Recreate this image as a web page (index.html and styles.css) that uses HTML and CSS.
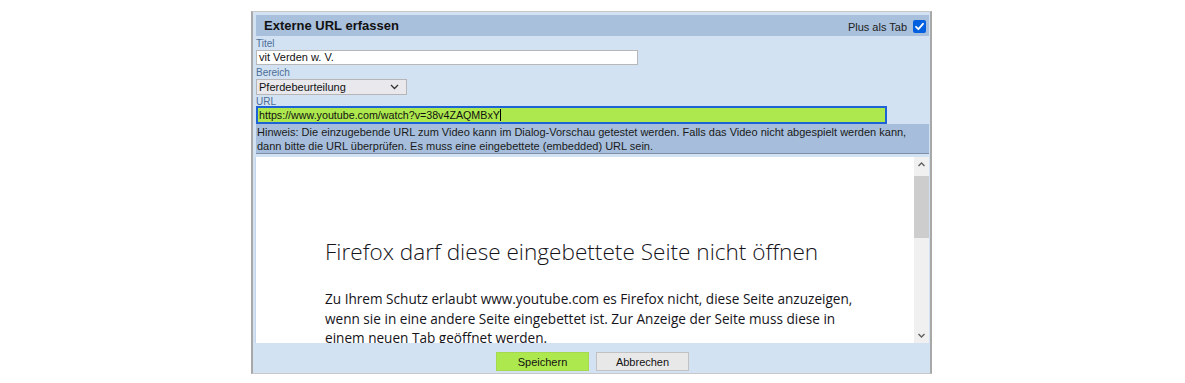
FILE: index.html
```html
<!DOCTYPE html>
<html lang="de">
<head>
  <meta charset="UTF-8">
  <title>Externe URL erfassen</title>
  <link rel="stylesheet" href="styles.css">
</head>
<body>
  <!-- Dialog -->
  <div class="dialog">
    <div class="dialog-header">
      <h1>Externe URL erfassen</h1>
      <label class="tab-toggle">
        Plus als Tab
        <svg class="checkbox" width="13" height="13" viewBox="0 0 13 13">
          <rect x="0" y="0" width="13" height="13" rx="2" fill="#0060df"/>
          <path d="M3 6.8 L5.4 9.2 L10 3.8" fill="none" stroke="#fff" stroke-width="1.8" stroke-linecap="round" stroke-linejoin="round"/>
        </svg>
      </label>
    </div>

    <div class="form">
      <div class="field-label">Titel</div>
      <div class="text-field title-field">vit Verden w. V.</div>

      <div class="field-label">Bereich</div>
      <div class="select-field">
        <span>Pferdebeurteilung</span>
        <svg width="9" height="6" viewBox="0 0 9 6">
          <path d="M1 1 L4.5 4.5 L8 1" fill="none" stroke="#333" stroke-width="1.3"/>
        </svg>
      </div>

      <div class="field-label url-label">URL</div>
      <div class="text-field url-field">https://www.youtube.com/watch?v=38v4ZAQMBxY<span class="caret"></span></div>
    </div>

    <div class="hint">
      Hinweis: Die einzugebende URL zum Video kann im Dialog-Vorschau getestet werden. Falls das Video nicht abgespielt werden kann,
      dann bitte die URL überprüfen. Es muss eine eingebettete (embedded) URL sein.
    </div>

    <!-- Preview frame -->
    <div class="preview">
      <div class="preview-content">
        <h2>Firefox darf diese eingebettete Seite nicht öffnen</h2>
        <p>Zu Ihrem Schutz erlaubt www.youtube.com es Firefox nicht, diese Seite anzuzeigen, wenn sie in eine andere Seite eingebettet ist. Zur Anzeige der Seite muss diese in einem neuen Tab geöffnet werden.</p>
      </div>
      <div class="scrollbar">
        <svg class="arrow" width="15" height="15" viewBox="0 0 15 15">
          <path d="M4.5 9 L7.5 6 L10.5 9" fill="none" stroke="#606060" stroke-width="1.4"/>
        </svg>
        <div class="track"><div class="thumb"></div></div>
        <svg class="arrow" width="15" height="15" viewBox="0 0 15 15">
          <path d="M4.5 6 L7.5 9 L10.5 6" fill="none" stroke="#606060" stroke-width="1.4"/>
        </svg>
      </div>
    </div>

    <div class="dialog-footer">
      <button class="btn btn-save">Speichern</button>
      <button class="btn btn-cancel">Abbrechen</button>
    </div>
  </div>
</body>
</html>
```

FILE: styles.css
```css
body {
  margin: 0;
  padding: 0;
  background-color: #ffffff;
  font-family: "Liberation Sans", Arial, sans-serif;
}

.dialog {
  box-sizing: border-box;
  width: 681px;
  margin: 11px auto 0 251px;
  padding: 3px 1px 0 3px;
  background-color: #d3e2f2;
  border: 1px solid #c8c8c8;
  border-left: 2px solid #a8a8a8;
  border-right: 2px solid #a8a8a8;
}

/* Header bar */
.dialog-header {
  display: flex;
  align-items: center;
  justify-content: space-between;
  height: 21px;
  padding: 0 3px 0 8px;
  background-color: #a8c0dc;
}

.dialog-header h1 {
  margin: 0;
  font-size: 13px;
  font-weight: bold;
  color: #111;
}

.tab-toggle {
  display: flex;
  align-items: center;
  gap: 6px;
  font-size: 11px;
  color: #222;
  padding-top: 2px;
}

/* Form */
.form {
  display: flex;
  flex-direction: column;
  align-items: flex-start;
}

.field-label {
  height: 14px;
  line-height: 16px;
  font-size: 10px;
  color: #4b6f96;
}

.url-label {
  height: 11px;
  line-height: 14px;
}

.text-field {
  box-sizing: border-box;
  height: 15px;
  line-height: 13px;
  padding: 0 2px;
  font-size: 11px;
  color: #111;
  background-color: #ffffff;
  border: 1px solid #b8b8b8;
  white-space: nowrap;
}

.title-field {
  width: 382px;
}

.url-field {
  width: 631px;
  height: 18px;
  line-height: 14px;
  padding: 0 1px;
  font-size: 10.7px;
  background-color: #ade84e;
  border: 2px solid #1e63d6;
}

.caret {
  display: inline-block;
  width: 1px;
  height: 12px;
  background-color: #000;
  vertical-align: -2px;
}

.select-field {
  box-sizing: border-box;
  display: flex;
  align-items: center;
  justify-content: space-between;
  width: 151px;
  height: 16px;
  padding: 0 7px 0 2px;
  font-size: 11px;
  color: #111;
  background-color: #e9e9ed;
  border: 1px solid #b6b6b6;
}

/* Hint */
.hint {
  padding: 1px 1px 0;
  height: 28px;
  line-height: 14px;
  font-size: 11px;
  color: #1a1a1a;
  background-color: #a6bedb;
  border-bottom: 1px solid #7d8ea5;
}

/* Preview frame */
.preview {
  display: flex;
  height: 186px;
  margin-top: 3px;
  background-color: #ffffff;
  border-left: 1px solid #c4d6ea;
  margin-left: -1px;
}

.preview-content {
  flex: 1;
  overflow: hidden;
  padding: 80px 0 0 69px;
  font-family: "Open Sans", sans-serif;
  color: #15141a;
}

.preview-content h2 {
  margin: 0 0 22px;
  font-size: 22.6px;
  font-weight: 300;
  line-height: 30px;
  white-space: nowrap;
}

.preview-content p {
  margin: 0;
  width: 540px;
  font-size: 13.6px;
  line-height: 19.6px;
}

.scrollbar {
  display: flex;
  flex-direction: column;
  width: 15px;
  background-color: #f0f0f0;
}

.track {
  flex: 1;
}

.thumb {
  height: 62px;
  margin-top: 4px;
  background-color: #cdcdcd;
}

/* Footer */
.dialog-footer {
  display: flex;
  justify-content: center;
  gap: 7px;
  height: 30px;
  padding-top: 9px;
  box-sizing: border-box;
}

.btn {
  width: 93px;
  height: 19px;
  padding: 0;
  font-family: "Liberation Sans", Arial, sans-serif;
  font-size: 11px;
  color: #111;
  border: 1px solid #c2c2c2;
  cursor: pointer;
}

.btn-save {
  background-color: #ade84e;
  border-color: #a6d94e;
}

.btn-cancel {
  background-color: #e8e8e8;
}
```
